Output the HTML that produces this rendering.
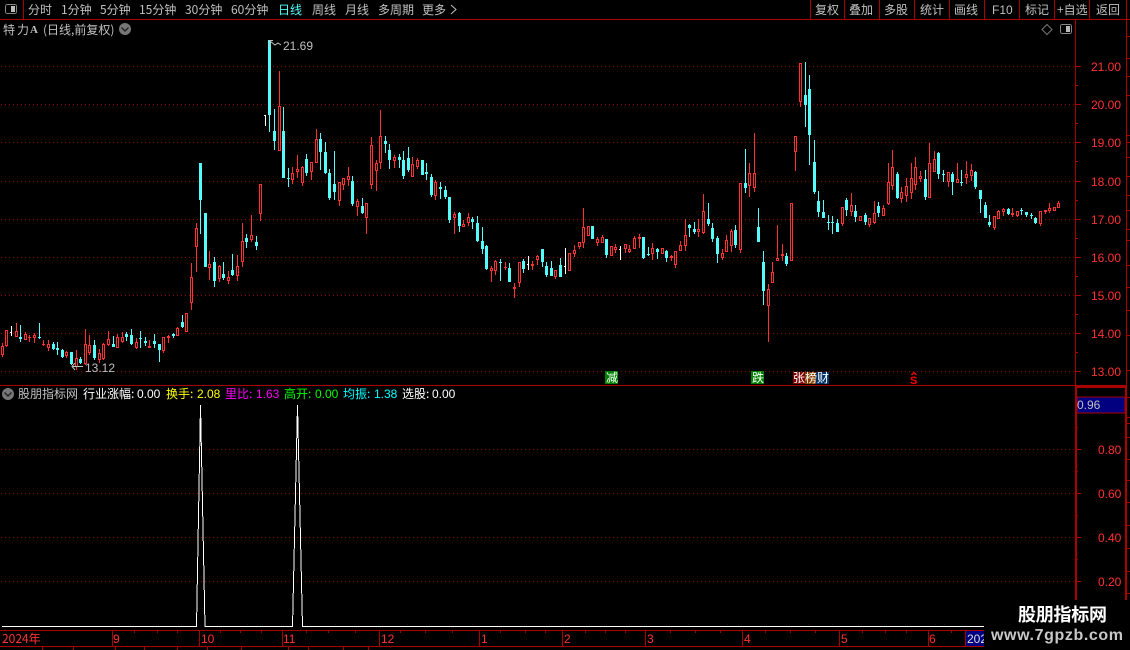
<!DOCTYPE html>
<html><head><meta charset="utf-8"><style>
html,body{margin:0;padding:0;background:#000;width:1130px;height:650px;overflow:hidden}
svg{display:block;position:absolute;left:0;top:0}
text{font-family:"Liberation Sans","WenQuanYi Zen Hei","Noto Sans CJK SC",sans-serif;font-size:12px;white-space:pre}
.c{font-family:"WenQuanYi Zen Hei","Noto Sans CJK SC",sans-serif;font-size:12px}
.g{fill:#c0c0c0}.r{fill:#ff3232}
</style></head><body>
<svg id="s" xmlns="http://www.w3.org/2000/svg" width="1130" height="650" viewBox="0 0 1130 650">
<g shape-rendering="crispEdges">
<g stroke="#8c0000" stroke-width="1" stroke-dasharray="1 3" fill="none">
<path d="M1 66.5H1075M1 104.5H1075M1 142.5H1075M1 181.5H1075M1 219.5H1075M1 257.5H1075M1 295.5H1075M1 333.5H1075M1 371.5H1075M1 449.5H1075M1 493.5H1075M1 537.5H1075M1 581.5H1075"/>
</g>
<g id="candles"></g>
<g stroke="#aa0000" stroke-width="1" fill="none">
<path d="M0 19.5H1130M23.5 0V19M810.5 0V19M844.5 0V19M879.5 0V19M914.5 0V19M949.5 0V19M984.5 0V19M1019.5 0V19M1054.5 0V19M1089.5 0V19"/>
<path d="M0 385.5H1126M1075.5 19V385M1126.5 0V600"/>
<path d="M1076 66.5H1081M1076 104.5H1081M1076 142.5H1081M1076 181.5H1081M1076 219.5H1081M1076 257.5H1081M1076 295.5H1081M1076 333.5H1081M1076 371.5H1081M1076 85.5H1078M1076 123.5H1078M1076 161.5H1078M1076 200.5H1078M1076 238.5H1078M1076 276.5H1078M1076 314.5H1078M1076 352.5H1078"/>
<path d="M1076 449.5H1081M1076 493.5H1081M1076 537.5H1081M1076 581.5H1081M1076 427.5H1078M1076 471.5H1078M1076 515.5H1078M1076 559.5H1078"/>
<path d="M1127 36.5H1130M1127 58.5H1130M1127 76.5H1130M1127 95.5H1130M1127 135.5H1130M1127 142.5H1130M1127 157.5H1130M1127 176.5H1130M1127 195.5H1130M1127 210.5H1130M1127 229.5H1130M1127 240.5H1130M1127 265.5H1130M1127 287.5H1130M1127 310.5H1130M1127 335.5H1130M1127 370.5H1130M1127 397.5H1130M1127 417.5H1130M1127 423.5H1130M1127 437.5H1130M1127 459.5H1130M1127 480.5H1130M1127 502.5H1130M1127 525.5H1130M1127 548.5H1130M1127 571.5H1130M1127 593.5H1130"/>
</g>
<rect x="1075" y="386" width="2" height="214" fill="#aa0000"/>
<rect x="1077" y="386" width="50" height="2" fill="#aa0000"/>
<rect x="1125" y="386" width="2" height="214" fill="#aa0000"/>
<rect x="1077" y="397" width="48" height="16" fill="#000080" stroke="#aa0000"/>
<!-- icons top -->
<rect x="5.5" y="4.5" width="11" height="9" rx="2" fill="none" stroke="#888"/>
<rect x="11" y="6" width="4" height="6" fill="#bbb"/>
<rect x="1060.5" y="24.5" width="11" height="9" rx="2" fill="none" stroke="#888"/>
<rect x="1066" y="26" width="4" height="6" fill="#bbb"/>
</g>
<path d="M1047 24.5L1052 29.5L1047 34.5L1042 29.5Z" fill="none" stroke="#777"/>
<circle cx="125" cy="29" r="6" fill="#777"/><path d="M121.5 27.5L125 31L128.500 27.500" fill="none" stroke="#222" stroke-width="1.400"/>
<circle cx="8" cy="394" r="6" fill="#777"/><path d="M4.500 392.500L8 396L11.500 392.500" fill="none" stroke="#222" stroke-width="1.400"/>
<!-- markers -->
<path d="M281 45L278 43L275 45L270 41M270 47V40.500H273" fill="none" stroke="#c0c0c0"/>
<path d="M83 366.500H72M75 363L72 366.500L75 370" fill="none" stroke="#c0c0c0"/>
<text x="283" y="50" class="g">21.69</text>
<text x="85" y="372" class="g">13.12</text>
<!-- top nav -->
<g class="c" fill="#c0c0c0">
<text class="c g" x="28" y="14">分时</text><text class="c g" x="61" y="14">1分钟</text><text class="c g" x="100" y="14">5分钟</text><text class="c g" x="139" y="14">15分钟</text><text class="c g" x="185" y="14">30分钟</text><text class="c g" x="231" y="14">60分钟</text>
<text class="c" fill="#54fcfc" x="278" y="14">日线</text>
<text class="c g" x="312" y="14">周线</text><text class="c g" x="345" y="14">月线</text><text class="c g" x="378" y="14">多周期</text><text class="c g" x="422" y="14">更多</text>
<text class="c g" x="815" y="14">复权</text><text class="c g" x="849" y="14">叠加</text><text class="c g" x="884" y="14">多股</text><text class="c g" x="920" y="14">统计</text><text class="c g" x="954" y="14">画线</text>
<text class="g" x="992" y="14">F10</text>
<text class="c g" x="1025" y="14">标记</text><text class="c g" x="1057" y="14">+自选</text><text class="c g" x="1096" y="14">返回</text>
</g>
<path d="M451 5L456 9.500L451 14" fill="none" stroke="#c0c0c0"/>
<!-- title -->
<text class="c g" x="3" y="34">特</text><text class="c g" x="17" y="34">力</text>
<text x="30" y="33" class="g" style="font-weight:bold;font-family:'Liberation Serif',serif;font-size:11px">A</text>
<text class="c g" x="43" y="34">(日线,前复权)</text>
<!-- axis labels -->
<g>
<text class="r" x="1091" y="71">21.00</text><text class="r" x="1091" y="109">20.00</text><text class="r" x="1091" y="147">19.00</text><text class="r" x="1091" y="186">18.00</text><text class="r" x="1091" y="224">17.00</text><text class="r" x="1091" y="262">16.00</text><text class="r" x="1091" y="300">15.00</text><text class="r" x="1091" y="338">14.00</text><text class="r" x="1091" y="376">13.00</text>
<text class="r" x="1098" y="454">0.80</text><text class="r" x="1098" y="498">0.60</text><text class="r" x="1098" y="542">0.40</text><text class="r" x="1098" y="586">0.20</text>
<text class="g" x="1077" y="409">0.96</text>
</g>
<!-- tags -->
<g shape-rendering="crispEdges">
<rect x="605" y="371" width="13" height="13" fill="#008000"/><rect x="751" y="371" width="13" height="13" fill="#008000"/>
<rect x="793" y="372" width="12" height="12" fill="#800000"/><rect x="805" y="372" width="11" height="12" fill="#804000"/><rect x="816" y="372" width="13" height="12" fill="#003366"/>
</g>
<text class="c" fill="#fff" x="606" y="382">减</text><text class="c" fill="#fff" x="752" y="382">跌</text>
<text class="c" fill="#fff" x="793" y="382">张</text><text class="c" fill="#fff" x="805" y="382">榜</text><text class="c" fill="#fff" x="817" y="382">财</text>
<text x="910" y="384" fill="#ff0000" style="font-weight:bold;font-size:11px">S</text><path d="M911.500 375L914 372.500L916.500 375" fill="none" stroke="#f00" stroke-width="1.300"/>
<!-- pane2 title -->
<text class="c g" x="18" y="398">股朋指标网</text>
<text class="c" fill="#fff" x="83" y="398">行业涨幅:</text><text fill="#fff" x="137" y="398">0.00</text>
<text class="c" fill="#ffff00" x="166" y="398">换手:</text><text fill="#ffff00" x="197" y="398">2.08</text>
<text class="c" fill="#ff00ff" x="225" y="398">里比:</text><text fill="#ff00ff" x="256" y="398">1.63</text>
<text class="c" fill="#00ff00" x="284" y="398">高开:</text><text fill="#00ff00" x="315" y="398">0.00</text>
<text class="c" fill="#00ffff" x="343" y="398">均振:</text><text fill="#00ffff" x="374" y="398">1.38</text>
<text class="c" fill="#fff" x="402" y="398">选股:</text><text fill="#fff" x="432" y="398">0.00</text>
<!-- white indicator line -->
<polyline points="2,626.500 196.500,626.500 200.500,405 205,626.500 292.500,626.500 297.500,405 302.500,626.500 984,626.500" fill="none" stroke="#fff" stroke-width="1" shape-rendering="crispEdges"/>
<!-- time axis -->
<g shape-rendering="crispEdges" stroke="#aa0000" fill="none">
<path d="M0 630.500H984M0 646.500H984M112.500 630V646M199.500 630V646M282.500 630V646M379.500 630V646M479.500 630V646M562.500 630V646M645.500 630V646M742.500 630V646M839.500 630V646M928.500 630V646M965.500 630V646"/>
<path d="M134.500 631V633M157.500 631V633M177.500 631V633M220.500 631V633M240.500 631V633M261.500 631V633M306.500 631V633M328.500 631V633M355.500 631V633M400.500 631V633M425.500 631V633M452.500 631V633M500.500 631V633M525.500 631V633M545.500 631V633M585.500 631V633M605.500 631V633M625.500 631V633M670.500 631V633M695.500 631V633M720.500 631V633M765.500 631V633M790.500 631V633M815.500 631V633M862.500 631V633M885.500 631V633M906.500 631V633M951.500 631V633"/>
<path d="M42.500 647V650M73.500 647V650M115.500 647V650M144.500 647V650M177.500 647V650M207.500 647V650M241.500 647V650M288.500 647V650M308.500 647V650M343.500 647V650M368.500 647V650"/>
<rect x="966" y="631" width="18" height="15" fill="#000080" stroke="none"/>
</g>
<text class="c r" x="2" y="643">2024年</text>
<text class="r" x="113" y="643">9</text><text class="r" x="201" y="643">10</text><text class="r" x="283" y="643">11</text><text class="r" x="381" y="643">12</text>
<text class="r" x="481" y="643">1</text><text class="r" x="564" y="643">2</text><text class="r" x="647" y="643">3</text><text class="r" x="744" y="643">4</text><text class="r" x="841" y="643">5</text><text class="r" x="929" y="643">6</text>
<text fill="#ddd" x="967" y="643">202</text>
<!-- watermark -->
<rect x="984" y="600" width="146" height="50" fill="#000"/>
<text x="1018" y="621" fill="#fff" textLength="89" style="font-family:'Noto Sans CJK SC','WenQuanYi Zen Hei',sans-serif;font-weight:bold;font-size:18px">股朋指标网</text>
<text x="991" y="640" fill="#c8c8c8" textLength="132" style="font-weight:bold;font-size:16px">www.7gpzb.com</text>
</svg>
<script>
var D=[
[0,200,"r 7 430 438 465 470;r 19 390 390 438 440;w 34 378 397 397 408;r 49 370 393 410 412;c 61 375 411 417 426;r 76 396 402 419 420;r 88 405 411 415 426;r 103 400 405 413 430;c 118 369 411 414 417;r 130 420 432 435 438;r 145 420 432 443 453;c 160 426 432 447 450;c 172 426 444 450 465;c 187 447 450 471 474;r 199 453 456 468 474;c 214 456 456 492 495;r 229 450 474 500 510;c 241 471 477 489 492;r 256 387 432 492 495;r 268 405 435 459 465;c 283 420 435 474 480;r 298 447 459 480 489;r 310 430 432 477 479;r 325 393 417 435 438;c 340 408 432 441 441;r 352 402 411 444 444;r 367 396 411 426 429;c 379 396 402 411 423;c 394 387 405 432 435;r 409 414 426 444 447;c 421 393 414 417 444;c 436 411 423 429 438;r 448 420 438 444 444;c 463 402 423 432 444;c 478 432 432 450 486;r 490 411 411 453 459;r 505 405 408 414 429;c 520 399 402 408 414;r 532 381 384 408 408;c 547 345 366 381 384;r 559 339 339 396 396;r 574 189 231 309 330;r 589 69 84 141 216;c 601 -111 -111 0 102;c 616 39 39 201 201;r 628 153 192 204 240;c 643 171 186 243 261;r 658 195 198 237 246;c 670 186 222 234 240;r 685 213 231 243 252;c 697 162 210 225 228;r 712 165 198 228 243;r 727 69 123 186 201;c 739 102 114 126 144;r 754 45 105 120 126;c 769 108 126 138 150;r 781 -48 -48 42 63"],
[0,30,"w 797 255 255 255 288;c 808 30 30 255 306;c 823 237 303 333 360;r 838 123 228 363 363;c 850 231 303 444 444;c 865 414 445 445 471"],
[290,100,"r 7 201 219 240 252;r 22 165 207 216 234;r 37 198 201 249 258;c 49 162 177 219 228;r 64 186 186 216 240;r 79 87 117 189 189;c 91 99 117 156 210;c 106 126 156 220 222;c 118 207 219 294 300;c 133 153 252 276 300;r 148 246 246 303 318;r 160 234 234 255 270;r 175 201 228 240 258;c 187 228 243 312 318;r 202 297 303 321 348;c 217 294 318 339 342;r 229 309 309 354 402;r 244 111 135 255 267;r 259 180 189 213 273;r 271 30 108 189 207;c 286 108 123 132 159;c 298 132 150 180 207;r 313 165 171 183 204;c 328 162 171 180 204;c 340 153 180 228 237;c 355 141 174 210 216;r 367 171 192 231 231;r 382 174 180 201 207;c 397 180 180 225 225;c 409 189 216 222 240;c 424 222 231 285 291;r 436 240 246 288 300;c 451 246 261 267 297;c 466 258 270 291 297;c 478 291 291 360 369;r 493 336 342 354 402;c 508 336 339 378 396;r 520 360 372 381 381;r 535 339 351 369 378;c 547 351 357 366 387;c 562 348 369 423 426;c 577 381 423 447 462;c 589 435 438 507 510;r 604 498 504 513 546;r 616 480 483 513 525;c 631 477 486 489 543;r 646 486 501 504 510;c 658 489 504 546 546;r 673 549 561 567 594;r 688 486 486 549 561;c 700 477 483 507 519;w 715 468 493 493 510;r 727 483 492 498 510;r 742 465 468 480 495;c 757 447 447 486 501;c 769 486 498 525 531;c 784 483 504 528 528;r 796 510 510 531 537;c 811 474 495 531 531;w 826 444 498 498 522;r 838 459 459 513 513;r 853 435 450 462 471;r 868 426 426 441 447"],
[570,120,"r 40 264 321 369 384;r 55 318 318 348 348;c 67 318 318 357 357;r 82 351 357 369 378;r 97 345 351 369 369;c 109 357 357 405 414;r 124 378 378 408 408;r 136 372 381 390 399;w 151 378 388 388 420;r 166 372 372 387 399;r 178 375 387 396 399;r 193 348 354 387 387;r 208 342 351 357 384;c 220 351 351 414 417;c 235 381 402 405 408;r 247 369 384 402 420;c 262 384 387 396 417;r 277 384 384 402 402;c 289 390 393 414 426;r 304 405 408 414 423;r 316 393 393 435 444;r 331 363 375 393 393;r 346 297 345 378 393;c 358 312 315 324 351;c 373 306 327 336 342;r 385 297 327 336 351;r 400 222 273 339 342;c 415 249 297 312 318;c 427 309 324 357 366;c 442 348 354 402 429;r 457 387 399 414 420;r 469 345 360 396 396;r 484 327 333 378 396;c 496 315 330 375 384;r 511 189 189 390 399;c 526 87 189 204 219;r 538 129 159 198 231;r 553 39 159 204 216;c 565 264 321 366 366;c 580 393 426 513 555;r 595 492 507 558 666;r 607 426 456 489 489;r 622 315 414 423 423;r 637 372 402 408 423;c 649 399 408 432 438;r 664 249 249 423 423"],
[780,50,"r 46 258 258 306 363;r 61 39 39 156 171;c 76 36 135 165 231;c 88 75 117 255 345;c 103 270 336 426 432;c 115 423 453 486 501;c 130 450 486 504 504;c 145 495 516 519 540;c 157 498 516 519 552;c 172 507 519 546 546;r 187 471 471 522 528;c 199 444 450 480 498;r 214 429 465 486 498;c 226 465 483 501 516;r 241 498 498 513 513;c 256 489 495 516 525;r 268 504 504 525 531;r 283 453 489 519 522;c 295 456 468 489 501;r 310 465 474 498 498;r 325 339 396 462 465;r 337 300 351 408 420;c 352 366 372 444 447;r 364 411 426 447 459;r 379 384 408 438 456;r 394 339 384 429 447;r 406 321 351 405 420;r 421 363 378 387 396;c 436 360 387 441 450;r 448 279 339 444 444;r 463 303 327 366 366;c 475 306 309 372 387;c 490 360 372 375 396;r 505 366 366 396 411;c 517 366 372 396 435;r 532 339 387 399 399;c 544 360 396 399 408;r 559 333 372 384 402;r 574 342 360 378 393;c 586 363 366 411 417;c 601 420 420 447 489;c 616 456 465 504 504;c 628 495 516 525 531;r 643 498 498 534 540;r 655 480 483 507 507;r 670 474 477 486 498;c 685 474 477 492 495;r 697 474 489 495 501;r 712 483 483 498 501;c 724 474 480 483 495;c 739 486 486 495 501;c 754 489 495 498 507;c 766 501 504 519 522;r 781 483 483 522 528;r 796 480 480 486 492;r 808 459 474 483 489;r 823 471 471 483 483;r 835 453 459 474 474"]
];
var col={r:"#ff3232",c:"#54fcfc",w:"#ffffff"},h="";
function R(x,y,w,ht,f){if(ht<=0)return;h+='<rect x="'+x+'" y="'+y+'" width="'+w+'" height="'+ht+'" fill="'+f+'"/>';}
D.forEach(function(s){s[2].split(";").forEach(function(e){var a=e.split(" "),t=a[0],f=col[t],p=Math.floor(s[0]+a[1]/3);
var Y=function(z){return Math.round(s[1]+z/3)},hi=Y(+a[2]),to=Y(+a[3]),bo=Y(+a[4]),lo=Y(+a[5]);
R(p,hi,1,Math.max(lo-hi,1),f);
if(t=="c"){R(p-1,to,3,Math.max(bo-to,1),f);}
else if(t=="r"){R(p-1,to,3,Math.max(bo-to,1),f);if(bo-to>2)R(p,to+1,1,bo-to-2,"#000");}
else{R(p-1,to,2,1,f);}
});});
document.getElementById("candles").innerHTML=h;
document.getElementById("candles").setAttribute("shape-rendering","crispEdges");
</script>
</body></html>
